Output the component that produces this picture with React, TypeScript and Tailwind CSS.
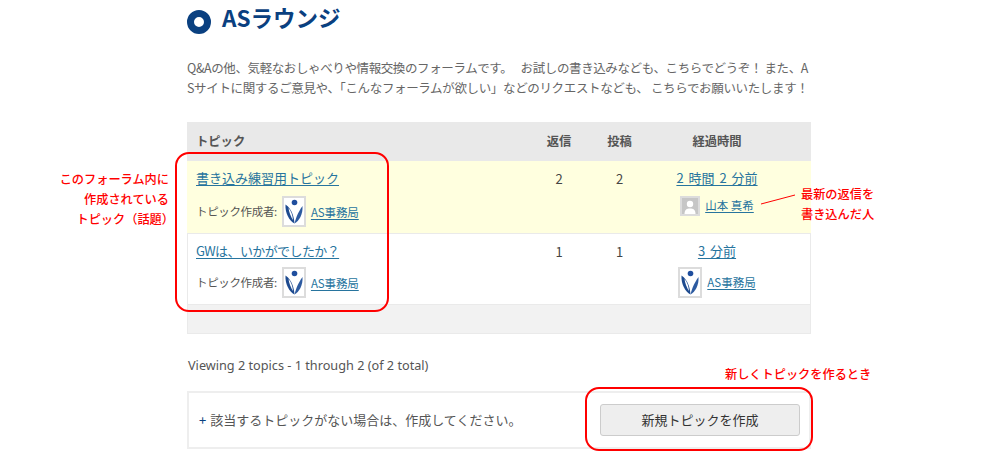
import React from 'react';

const Logo: React.FC = () => (
  <span className="inline-block border-2 border-[#dcdcdc] bg-white shrink-0 w-[24px] h-[31px]">
    <svg viewBox="0 0 20 27" className="w-full h-full">
      <circle cx="10.5" cy="4.5" r="2.8" fill="#1f4e9e" />
      <path d="M1.5 6.5 C1 15 5 22.5 10.5 25.5 C10 19 8 11 1.5 6.5 Z" fill="#1d4a8f" />
      <path d="M18.5 8 C19 16 15.5 22.5 10.5 25.5 C11.5 21 14 14 18.5 8 Z" fill="#2c5aa0" />
      <path d="M4.5 10 C5 14 7 19 9 22 C8.5 17 7 12.5 4.5 10 Z" fill="#ffffff" />
    </svg>
  </span>
);

const Avatar: React.FC = () => (
  <span className="inline-block border-2 border-[#dcdcdc] shrink-0 w-[20px] h-[20px]">
    <svg viewBox="0 0 16 16" className="w-full h-full">
      <rect width="16" height="16" fill="#c6c6c6" />
      <circle cx="8" cy="6" r="3.2" fill="#ffffff" />
      <path d="M2.5 16 C2.5 11.5 5 10.5 8 10.5 C11 10.5 13.5 11.5 13.5 16 Z" fill="#ffffff" />
    </svg>
  </span>
);

const linkCls = 'text-[#27749e] underline underline-offset-2';

const Author: React.FC<{ gap: string }> = ({ gap }) => (
  <div className={`flex items-center text-[11.5px] leading-[16px] text-[#555] ${gap}`}>
    <span className="-translate-y-[2px] tracking-[-0.35px]">トピック作成者:</span>
    <span className="ml-[5px]"><Logo /></span>
    <a className={`${linkCls} ml-[5px] -translate-y-[1px] tracking-[-0.1px]`}>AS事務局</a>
  </div>
);

const Row: React.FC<{
  title: string; titleCls: string; voices: string; posts: string; time: string;
  rowCls: string; gap: string; latest: React.ReactNode;
}> = ({ title, titleCls, voices, posts, time, rowCls, gap, latest }) => (
  <div className={`flex border-b border-[#eaeaea] pt-[9px] ${rowCls}`}>
    <div className="w-[342px] pl-[9px]">
      <a className={`block w-fit leading-[18px] -translate-y-[1px] ${linkCls} ${titleCls}`}>{title}</a>
      <Author gap={gap} />
    </div>
    <div className="w-[60px] text-center text-[13px] leading-[18px] text-[#444]">{voices}</div>
    <div className="w-[61px] text-center text-[13px] leading-[18px] text-[#444]">{posts}</div>
    <div className="w-[134px] flex flex-col items-center">
      <a className={`${linkCls} text-[13px] leading-[18px] -translate-y-[1px] [word-spacing:2px]`}>{time}</a>
      {latest}
    </div>
  </div>
);

export default function App() {
  return (
    <div
      className="relative w-[1000px] h-[462px] overflow-hidden bg-white text-[#555]"
      style={{ fontFamily: '"Noto Sans CJK JP", "Liberation Sans", sans-serif' }}
    >
      <div className="ml-[187px] w-[624px] flex flex-col">
        <div className="flex items-center h-[40px] gap-[11px]">
          <span className="w-[24px] h-[24px] rounded-full border-[7px] border-[#0a4080] mt-[3px]" />
          <h1 className="text-[22.5px] font-bold text-[#0a4080] leading-none mb-[6px]">ASラウンジ</h1>
        </div>
        <div className="mt-[18px] h-[64px] text-[12.5px] leading-[20px] text-[#666] whitespace-pre">
          <p className="tracking-[-0.39px]">Q&amp;Aの他、気軽なおしゃべりや情報交換のフォーラムです。　 お試しの書き込みなども、こちらでどうぞ！ また、A</p>
          <p className="tracking-[-0.35px]">Sサイトに関するご意見や、「こんなフォーラムが欲しい」などのリクエストなども、 こちらでお願いいたします！</p>
        </div>
        <div className="flex items-center h-[39px] bg-[#e9e9e9] text-[12.3px] font-bold text-[#555]">
          <div className="w-[342px] pl-[9px]">トピック</div>
          <div className="w-[60px] text-center">返信</div>
          <div className="w-[61px] text-center">投稿</div>
          <div className="w-[134px] text-center">経過時間</div>
        </div>
        <Row
          title="書き込み練習用トピック"
          titleCls="text-[13px]"
          voices="2"
          posts="2"
          time="2 時間 2 分前"
          rowCls="h-[73px] bg-[#ffffdf]"
          gap="mt-[8px]"
          latest={
            <div className="flex items-center mt-[8px] text-[11.5px] leading-[16px]">
              <Avatar />
              <a className={`${linkCls} ml-[5px] -translate-y-[1px]`}>山本 真希</a>
            </div>
          }
        />
        <Row
          title="GWは、いかがでしたか？"
          titleCls="text-[13px] tracking-[-0.6px]"
          voices="1"
          posts="1"
          time="3 分前"
          rowCls="h-[71px] bg-white shadow-[inset_1px_0_0_#eaeaea,inset_-1px_0_0_#eaeaea]"
          gap="mt-[6px]"
          latest={
            <div className="flex items-center mt-[6px] text-[11.5px] leading-[16px]">
              <Logo />
              <a className={`${linkCls} ml-[5px] -translate-y-[1px]`}>AS事務局</a>
            </div>
          }
        />
        <div className="h-[29px] bg-[#f2f2f2] border-b border-x border-[#eaeaea]" />
        <div className="mt-[22px] ml-[1px] h-[35px] text-[12.7px] leading-[18px] text-[#555]" style={{ fontFamily: '"Noto Sans", "Noto Sans CJK JP", sans-serif' }}>
          Viewing 2 topics - 1 through 2 (of 2 total)
        </div>
        <div className="flex items-center justify-between h-[58px] border-2 border-[#eeeeee] pl-[10px] pr-[9px]">
          <span className="text-[13px] text-[#555]"><span className="text-[#0a4080] mr-[4px]">+</span>該当するトピックがない場合は、作成してください。</span>
          <button className="w-[200px] h-[32px] bg-[#eeeeee] border border-[#cccccc] rounded-[3px] text-[13px] text-[#333]">新規トピックを作成</button>
        </div>
      </div>

      {/* annotations */}
      <div className="absolute left-[175px] top-[152px] w-[214px] h-[160px] border-2 border-[#ff0000] rounded-[14px]" />
      <div className="absolute left-[585px] top-[387px] w-[228px] h-[64px] border-2 border-[#ff0000] rounded-[14px]" />
      <div className="absolute right-[831px] top-[169px] w-[130px] text-right text-[12.2px] leading-[20px] font-medium text-[#ff0000]">
        <div>このフォーラム内に</div>
        <div>作成されている</div>
        <div className="-mr-[5px]">トピック（話題）</div>
      </div>
      <div className="absolute left-[801px] top-[184px] text-[12.2px] leading-[20px] font-medium text-[#ff0000]">
        <div>最新の返信を</div>
        <div>書き込んだ人</div>
      </div>
      <div className="absolute left-[725px] top-[366px] text-[12.2px] leading-[16px] font-medium text-[#ff0000]">新しくトピックを作るとき</div>
      <svg className="absolute left-[760px] top-[194px]" width="36" height="12" viewBox="0 0 36 12">
        <line x1="1" y1="10" x2="35" y2="1" stroke="#ff0000" strokeWidth="1" />
      </svg>
    </div>
  );
}
